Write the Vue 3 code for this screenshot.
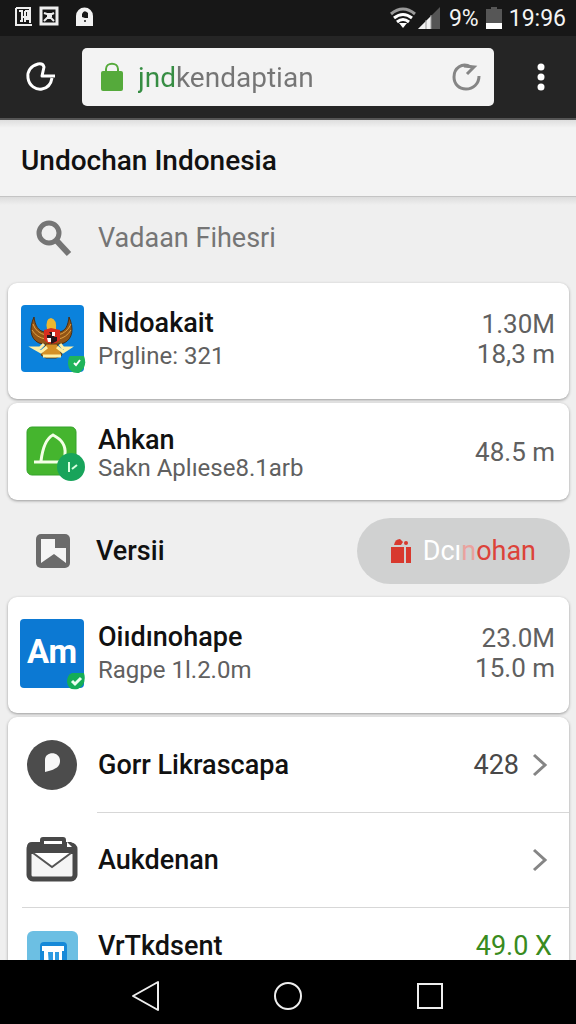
<script setup>
import { ref } from 'vue'

const address = ref('jndkendaptian')
const query = ref('')
</script>

<template>
  <div class="screen">
    <header class="status">
      <svg class="notifications" viewBox="0 0 84 24" width="84" height="24" aria-hidden="true">
        <path d="M2 2H16V17M2 2V19H18" fill="none" stroke="#eee" stroke-width="2" />
        <path d="M5 5H8V15H6M11 5V16M11 5H14V13H11M7 11H13" fill="none" stroke="#eee" stroke-width="2" />
        <rect x="27" y="2" width="16" height="16" fill="none" stroke="#eee" stroke-width="3" />
        <path d="M30 7L33 8H38L40 7M30 15L33 12H37L40 15M33 10H38" fill="none" stroke="#eee" stroke-width="2" />
        <path d="M62 20V10A8.500 8.500 0 0 1 79 10V20Z" fill="#f2f2f2" />
        <path d="M68 11V8Q70 3 74 7V12H71Z" fill="#171717" />
        <circle cx="71" cy="15" r="1" fill="#171717" />
      </svg>
      <div class="system">
        <svg viewBox="0 0 52 24" width="52" height="24" aria-hidden="true">
          <path d="M1 8Q13-2 25 8" fill="none" stroke="#999" stroke-width="3" />
          <path d="M4 12Q13 5 22 12M7 16Q13 11 19 16" fill="none" stroke="#fff" stroke-width="3" />
          <path d="M9 17L13 22L17 17Z" fill="#fff" />
          <path d="M28 23L50 1V23Z" fill="#555" />
          <path d="M28 23L41 10V23Z" fill="#f4f4f4" />
          <path d="M36 14V23M41 9V23" stroke="#999" stroke-width="1" />
        </svg>
        <span>9%</span>
        <svg viewBox="0 0 16 24" width="16" height="24" aria-hidden="true">
          <path d="M0 3H5V1H11V3H16V23H0Z" fill="#565656" />
          <path d="M0 17H16V23H0Z" fill="#fff" />
        </svg>
        <time>19:96</time>
      </div>
    </header>

    <div class="browser">
      <button class="bar-button" type="button" aria-label="Home">
        <svg viewBox="0 0 32 32" width="32" height="32" aria-hidden="true">
          <path d="M30 15H17L19 6Q18 2 13 3C6 5 2 10 3 17C4 25 11 29 17 28C23 27 26 23 27 17" fill="none" stroke="#fff" stroke-width="3" stroke-linejoin="round" />
        </svg>
      </button>
      <form class="address" @submit.prevent>
        <svg viewBox="0 0 22 30" width="22" height="30" aria-hidden="true">
          <path d="M5 10V7C5 0 17 0 17 7V10" fill="none" stroke="#55aa3b" stroke-width="2" />
          <rect y="9" width="22" height="20" rx="2" fill="#55aa3b" />
        </svg>
        <input v-model="address" type="text" aria-label="Address" />
        <button type="button" aria-label="Reload">
          <svg viewBox="0 0 30 30" width="30" height="30" aria-hidden="true">
            <path d="M20 5C11 0 3 6 3 15C3 22 8 27 15 27C22 27 28 22 28 14" fill="none" stroke="#858585" stroke-width="3" />
            <path d="M13 4L23 5L16 12" fill="none" stroke="#858585" stroke-width="3" />
          </svg>
        </button>
      </form>
      <button class="bar-button menu" type="button" aria-label="Menu">
        <svg viewBox="0 0 8 28" width="8" height="28" aria-hidden="true">
          <g fill="#fff"><circle cx="4" cy="4" r="3.500" /><circle cx="4" cy="14" r="3.500" /><circle cx="4" cy="24" r="3.500" /></g>
        </svg>
      </button>
    </div>

    <main>
      <h1>Undochan Indonesia</h1>

      <label class="search">
        <svg viewBox="0 0 38 38" width="38" height="38" aria-hidden="true">
          <circle cx="14" cy="14" r="10" fill="none" stroke="#757575" stroke-width="5" />
          <path d="M21 21L34 35" stroke="#757575" stroke-width="6" />
        </svg>
        <input v-model="query" type="search" placeholder="Vadaan Fihesri" aria-label="Search" />
      </label>

      <a class="card tall" href="#nidoakait">
        <svg class="tile" viewBox="0 0 66 72" width="66" height="72" aria-hidden="true">
          <rect x="1" y="2" width="63" height="67" rx="4" fill="#0b82dc" />
          <path d="M14 14C9 25 10 36 19 40L29 42L26 29C18 29 15 22 14 14Z" fill="#925516" stroke="#472f16" />
          <path d="M49 14C54 25 53 36 44 40L34 42L38 29C46 29 48 22 49 14Z" fill="#925516" stroke="#472f16" />
          <path d="M13 21Q16 30 26 32M12 27Q17 35 26 36M51 21Q47 30 38 32M51 27Q46 35 38 36" fill="none" stroke="#e0a144" stroke-width="1" />
          <path d="M27 26Q25 16 31 15Q37 16 36 27L32 30Z" fill="#efb72f" />
          <path d="M24 27L31 25L40 27V37L32 43L24 37Z" fill="#d92d20" />
          <path d="M29 29H34V34H37V38L31 41V35H27V32H31Z" fill="#24161b" />
          <path d="M32 29H35V33H32ZM27 35H31V39H28Z" fill="#fff" />
          <path d="M26 41L37 41L42 52L36 55H26L21 52Z" fill="#d59127" stroke="#593b15" />
          <path d="M24 41L20 45H14L21 49L27 44M40 41L43 45H49L43 49L37 44M23 53H41" fill="none" stroke="#fff0a5" stroke-width="3" />
          <path d="M50 53H64Q68 64 59 70Q49 71 48 61Q48 55 50 53Z" fill="#1fb45b" />
          <path d="M54 60L56 62L60 57" fill="none" stroke="#fff" stroke-width="2" />
        </svg>
        <span class="copy"><strong>Nidoakait</strong><small>Prgline: 321</small></span>
        <span class="amount">1.30M<br />18,3 m</span>
      </a>

      <a class="card short" href="#ahkan">
        <svg class="tile" viewBox="0 0 66 60" width="66" height="60" aria-hidden="true">
          <rect x="7" y="5" width="49" height="48" rx="5" fill="#45b52e" stroke="#35a32a" />
          <path d="M14 40H45V32C46 23 41 17 33 13C27 16 23 23 21 39" fill="none" stroke="#f4ffe6" stroke-width="3" />
          <circle cx="51" cy="45" r="14" fill="#18a45b" />
          <path d="M49 40V50M52 47L57 43" stroke="#d8ffdf" stroke-width="2" />
        </svg>
        <span class="copy"><strong>Ahkan</strong><small>Sakn Aplıese8.1arb</small></span>
        <span class="amount">48.5 m</span>
      </a>

      <section class="version">
        <svg viewBox="0 0 36 36" width="36" height="36" aria-hidden="true">
          <rect x="1" y="1" width="34" height="34" rx="5" fill="#6b6b6b" />
          <path d="M6 6H20V15H31V30L19 21L6 30Z" fill="#f5f5f5" />
        </svg>
        <h2>Versii</h2>
        <button class="pill" type="button">
          <svg viewBox="0 0 20 26" width="20" height="26" aria-hidden="true">
            <path d="M0 9H13V25H0ZM15 9H20V25H15Z" fill="#d8392e" />
            <path d="M3 7Q4 1 9 1L12 4L10 7Z" fill="#d8392e" />
            <circle cx="15" cy="5" r="2" fill="#d8392e" />
          </svg>
          <span><b>Dcı</b><i>n</i>ohan</span>
        </button>
      </section>

      <a class="card tall" href="#oiidinohape">
        <span class="tile app">
          <span>Am</span>
          <svg viewBox="0 0 20 20" width="20" height="20" aria-hidden="true">
            <path d="M6 2H18Q21 13 12 18Q2 20 1 11Q1 4 6 2Z" fill="#14ad57" />
            <path d="M6 10L9 13L15 7" fill="none" stroke="#eafff0" stroke-width="3" />
          </svg>
        </span>
        <span class="copy"><strong>Oiıdınohape</strong><small>Ragpe 1l.2.0m</small></span>
        <span class="amount">23.0M<br />15.0 m</span>
      </a>

      <nav class="list" aria-label="Apps">
        <a href="#gorr">
          <svg class="tile" viewBox="0 0 66 52" width="66" height="52" aria-hidden="true">
            <circle cx="32" cy="26" r="25" fill="#4c4c4c" />
            <path d="M25 33V21C25 12 40 12 40 22C40 29 33 31 25 33Z" fill="#f7f7f7" />
          </svg>
          <span class="name">Gorr Likrascapa</span>
          <span class="count">428</span>
          <svg class="chevron" viewBox="0 0 16 26" width="16" height="26" aria-hidden="true"><path d="M2 3L13 13L2 23" fill="none" stroke="#858585" stroke-width="3" /></svg>
        </a>
        <a class="indented" href="#aukdenan">
          <svg class="tile" viewBox="0 0 66 52" width="66" height="52" aria-hidden="true">
            <rect x="9" y="11" width="46" height="34" rx="4" fill="#f5f5f5" stroke="#484848" stroke-width="5" />
            <path d="M7 20V13Q7 8 12 8H51L57 14V20Z" fill="#484848" />
            <rect x="22" y="5" width="22" height="7" rx="1" fill="#fff" stroke="#484848" stroke-width="4" />
            <path d="M47 8L52 13H47Z" fill="#fff" />
            <path d="M13 19L32 33L51 19" fill="#fff" stroke="#555" stroke-width="2" />
          </svg>
          <span class="name">Aukdenan</span>
          <svg class="chevron" viewBox="0 0 16 26" width="16" height="26" aria-hidden="true"><path d="M2 3L13 13L2 23" fill="none" stroke="#858585" stroke-width="3" /></svg>
        </a>
        <a class="last" href="#vrtkdsent">
          <svg class="tile" viewBox="0 0 66 52" width="66" height="52" aria-hidden="true">
            <rect x="7" y="0" width="51" height="51" rx="6" fill="#6cbfe3" />
            <rect x="20" y="11" width="27" height="30" rx="4" fill="#1689d8" />
            <path d="M22 15H44V20H42V36H24V20H22Z" fill="#fff" />
            <path d="M28 21H33V36H29ZM35 21H39V36H35Z" fill="#2c9ae2" />
          </svg>
          <span class="name">VrTkdsent</span>
          <span class="count green">49.0 X</span>
        </a>
      </nav>
    </main>

    <footer>
      <button type="button" aria-label="Back">
        <svg viewBox="0 0 32 32" width="32" height="32"><path d="M3 16L28 2V30Z" fill="none" stroke="#eee" stroke-width="2" stroke-linejoin="round" /></svg>
      </button>
      <button type="button" aria-label="Home screen">
        <svg viewBox="0 0 32 32" width="32" height="32"><circle cx="16" cy="16" r="13" fill="none" stroke="#eee" stroke-width="2" /></svg>
      </button>
      <button type="button" aria-label="Recent apps">
        <svg viewBox="0 0 32 32" width="32" height="32"><rect x="4" y="4" width="24" height="24" fill="none" stroke="#eee" stroke-width="2" /></svg>
      </button>
    </footer>
  </div>
</template>

<style>
body { margin: 0; background: #efefef; }
</style>

<style scoped>
* { box-sizing: border-box; }
.screen {
  display: flex;
  flex-direction: column;
  height: 100vh;
  overflow: hidden;
  color: #111;
  background: #efefef;
  font-family: Roboto, "Noto Sans", sans-serif;
}
svg { display: block; flex: none; }
button { display: flex; align-items: center; justify-content: center; padding: 0; border: 0; background: none; font: inherit; }
input { min-width: 0; padding: 0; border: 0; outline: 0; background: none; font: inherit; }
a { color: inherit; text-decoration: none; }
.status {
  display: flex;
  align-items: center;
  justify-content: space-between;
  flex: none;
  height: 36px;
  padding: 0 10px 0 14px;
  background: #171717;
  color: #f4f4f4;
  font-size: 23px;
}
.system { display: flex; align-items: center; gap: 7px; }
.browser {
  display: flex;
  align-items: center;
  flex: none;
  height: 84px;
  background: #252525;
  border-bottom: 2px solid #555;
}
.bar-button { width: 82px; height: 64px; }
.menu { padding-left: 12px; }
.address {
  display: flex;
  align-items: center;
  flex: 1;
  min-width: 0;
  height: 58px;
  padding: 0 13px 0 19px;
  border-radius: 5px;
  background: #f3f3f3;
}
.address input {
  flex: 1;
  margin-left: 15px;
  color: #757575;
  font-size: 28px;
  background: linear-gradient(to right, #368d43 38px, #757575 38px);
  background-clip: text;
  -webkit-background-clip: text;
  -webkit-text-fill-color: transparent;
}
main { flex: 1; min-height: 0; overflow: hidden; }
h1 {
  display: flex;
  align-items: center;
  height: 77px;
  margin: 0;
  padding: 4px 21px 0;
  border-bottom: 1px solid #c4c4c4;
  background: linear-gradient(#dedede, #f3f3f3 8px);
  font-size: 28px;
  font-weight: 500;
}
.search {
  display: flex;
  align-items: center;
  height: 86px;
  padding: 0 35px 4px;
  background: linear-gradient(#dcdcdc, #efefef 8px);
}
.search input { flex: 1; margin-left: 25px; color: #757575; font-size: 27px; }
.search input::placeholder { color: #757575; opacity: 1; }
.card {
  display: flex;
  align-items: center;
  margin: 0 7px 4px 8px;
  padding: 0 14px 4px 12px;
  border-radius: 9px;
  background: #fff;
  box-shadow: 0 1px 3px #999;
}
.tall { height: 116px; }
.short { height: 97px; margin-bottom: 0; padding-bottom: 0; }
.tile { width: 66px; margin-right: 12px; }
.copy { display: flex; flex-direction: column; flex: 1; min-width: 0; white-space: nowrap; }
.copy strong { font-size: 27px; line-height: 33px; font-weight: 500; }
.copy small { color: #606060; font-size: 24px; line-height: 32px; }
.short small { line-height: 22px; }
.amount { color: #606060; font-size: 26px; line-height: 30px; text-align: right; white-space: nowrap; }
.version { display: flex; align-items: center; height: 97px; padding: 4px 6px 0 35px; }
h2 { flex: 1; margin: 0 0 0 25px; font-size: 27px; font-weight: 500; }
.pill {
  gap: 12px;
  height: 66px;
  padding: 0 34px;
  border-radius: 33px;
  background: #d0d1d1;
  color: #dc4339;
  font-size: 27px;
}
.pill b { color: #fff; font-weight: 400; }
.pill i { color: #eaa29e; font-style: normal; }
.app {
  position: relative;
  display: flex;
  align-items: center;
  justify-content: center;
  width: 64px;
  height: 69px;
  margin-right: 14px;
  padding-bottom: 4px;
  border-radius: 4px;
  background: #0c79d3;
  color: #fff;
  font-size: 33px;
  font-weight: 700;
}
.app svg { position: absolute; right: -2px; bottom: -3px; }
.list { margin: 0 7px 0 8px; border-radius: 9px 9px 0 0; background: #fff; box-shadow: 0 1px 3px #999; }
.list a { position: relative; display: flex; align-items: center; height: 95px; padding: 0 21px 0 12px; }
.list a + a::before { content: ""; position: absolute; top: 0; right: 0; left: 14px; height: 1px; background: #d7d7d7; }
.list .indented::before { left: 89px; }
.name { flex: 1; font-size: 27px; font-weight: 500; white-space: nowrap; }
.count { color: #484848; font-size: 27px; }
.chevron { margin-left: 13px; }
.list .last { align-items: flex-start; padding: 24px 17px 0 12px; }
.last .name, .last .count { line-height: 30px; }
.list .green { color: #398b20; }
footer {
  display: flex;
  align-items: center;
  justify-content: center;
  gap: 110px;
  flex: none;
  height: 64px;
  padding-top: 7px;
  background: #000;
}
</style>
